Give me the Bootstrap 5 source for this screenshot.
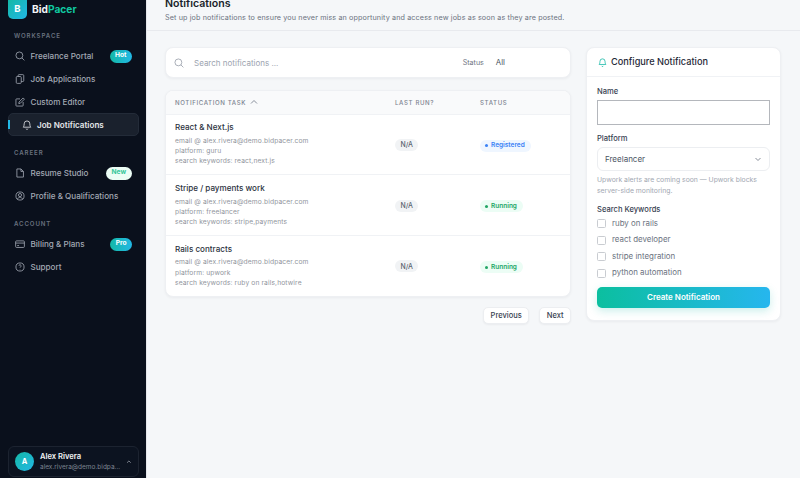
<!DOCTYPE html>
<html lang="en">
<head>
    <meta charset="UTF-8">
    <meta name="viewport" content="width=device-width, initial-scale=1.0">
    <title>Notifications</title>
    <link href="https://cdn.jsdelivr.net/npm/bootstrap@5.3.0/dist/css/bootstrap.min.css" rel="stylesheet">
    <style>
        html, body { height: 100%; overflow: hidden; }
        body { font-family: Inter, "Liberation Sans", sans-serif; background: #f5f7f9; color: #1f2937; font-size: 9.4px; }
        .app-shell { width: 800px; height: 478px; overflow: hidden; }

        .side-bar { width: 147px; height: 478px; background: #0a101c; border-right: 1px solid #e5e7eb; padding: 0 7px 1px 8px; flex-shrink: 0; }
        .brand-row { height: 19px; margin-bottom: 10px; gap: 5px; }
        .brand-logo { width: 19px; height: 19px; margin-top: -1px; border-radius: 0 0 5px 5px; background: linear-gradient(135deg, #14b8a6, #22b8e6); color: #fff; font-weight: 700; font-size: 9.5px; }
        .brand-name { font-weight: 700; font-size: 10.2px; color: #f3f4f6; }
        .brand-name span { color: #10c9a0; }
        .side-head { font-size: 6.1px; font-weight: 600; letter-spacing: .9px; color: #69717f; padding-left: 6px; line-height: 8px; margin: 3px 0 5px; }
        .side-link { height: 22.8px; padding-left: 7px; gap: 5.5px; color: #a3a9b4; font-size: 8.1px; font-weight: 500; text-decoration: none; border-radius: 5px; position: relative; }
        .side-link svg { width: 10px; height: 10px; flex-shrink: 0; }
        .side-link.is-active { background: #1a212d; color: #e5e7eb; padding-left: 12.5px; font-weight: 600; border: 1px solid #232b38; }
        .side-link.is-active::before { content: ""; position: absolute; left: -1px; top: 6px; width: 2px; height: 9px; background: #22b8e6; }
        .side-group { margin-bottom: 9.5px; }
        .tag-pill { margin-left: auto; margin-right: 7px; border-radius: 99px; height: 13px; padding: 0 5.5px; font-size: 6.6px; font-weight: 700; color: #fff; background: linear-gradient(90deg, #14b8a6, #22b8e6); }
        .tag-pill.tag-new { background: #ecfdf5; color: #34c79a; padding: 0 6px; }
        .user-box { margin-top: auto; height: 31px; border: 1px solid #1c2330; border-radius: 6px; padding: 0 6px; gap: 6px; background: #0c1320; }
        .user-dot { width: 19px; height: 19px; border-radius: 50%; background: linear-gradient(135deg, #14b8a6, #22b8e6); color: #fff; font-size: 7.5px; font-weight: 700; flex-shrink: 0; }
        .user-name { font-size: 7.6px; font-weight: 600; color: #f3f4f6; line-height: 10px; }
        .user-mail { font-size: 6.5px; color: #7d8491; line-height: 10px; white-space: nowrap; }

        .main-area { flex: 1; min-width: 0; }
        .page-top { height: 34px; margin-top: -3px; padding: 0 18px; border-bottom: 1px solid #e8eaee; }
        .page-title { font-size: 10.6px; font-weight: 600; color: #1a1f2b; line-height: 14px; margin: 0; }
        .page-sub { font-size: 7.2px; color: #6b7280; line-height: 12px; margin: 1px 0 0 0; letter-spacing: .125px; }
        .page-body { padding: 16px 19px 0 18px; gap: 15px; }
        .left-col { width: 406px; }
        .right-col { width: 195px; }
        .white-card { background: #fff; border: 1px solid #eef0f3; border-radius: 8px; box-shadow: 0 1px 3px rgba(17,24,39,.05); }

        .search-card { height: 31px; padding: 0 8px; margin-bottom: 12px; }
        .search-card svg { width: 10px; height: 10px; color: #8f96a1; }
        .search-hint { margin-left: 10px; font-size: 8px; color: #9ca3af; }
        .status-lab { margin-left: auto; font-size: 7.1px; color: #6b7280; margin-right: 12px; padding-top: 1px; }
        .status-val { font-size: 7.8px; color: #4b5563; margin-right: 57px; }

        .task-table { overflow: hidden; }
        .task-head, .task-row { display: grid; grid-template-columns: 220px 85px 1fr; padding-left: 9px; }
        .task-head { height: 22.5px; background: #f9fafb; align-items: center; font-size: 6.1px; font-weight: 500; letter-spacing: .62px; color: #7c8390; }
        .task-row { height: 60.8px; align-items: center; border-top: 1px solid #f0f2f5; }
        .task-name { font-size: 8.1px; font-weight: 500; color: #2b3240; line-height: 11px; margin-bottom: 2.5px; }
        .task-meta { font-size: 6.7px; color: #91959d; line-height: 10.3px; letter-spacing: .12px; }
        .na-pill { display: inline-block; background: #f1f3f5; color: #5b6370; border-radius: 99px; font-size: 6.9px; font-weight: 500; padding: 1.5px 5.5px; line-height: 9px; }
        .state-pill { display: inline-flex; align-items: center; gap: 3px; border-radius: 99px; font-size: 6.5px; font-weight: 600; padding: 1.5px 6px 1.5px 5px; line-height: 9px; }
        .state-pill::before { content: ""; width: 3px; height: 3px; border-radius: 50%; background: currentColor; }
        .state-reg { background: #eff6ff; color: #3b82f6; }
        .state-run { background: #ecfdf5; color: #22a565; }
        .pager-row { margin-top: 10px; gap: 10px; }
        .pager-btn { background: #fff; border: 1px solid #eceef1; border-radius: 5px; height: 17px; padding: 0 6.5px; font-size: 7.5px; font-weight: 500; color: #374151; box-shadow: 0 1px 2px rgba(17,24,39,.05); }

        .config-head { height: 29px; padding: 0 11px; gap: 4px; border-bottom: 1px solid #f0f2f5; font-size: 9.2px; font-weight: 500; color: #1f2937; }
        .config-head svg { width: 9px; height: 9px; color: #14b8a6; }
        .config-body { padding: 10px 10px 12px 10px; }
        .field-lab { font-size: 7.6px; font-weight: 500; color: #374151; line-height: 10px; margin-bottom: 3px; }
        .kw-lab { margin-bottom: 0; }
        .name-box { display: block; width: 100%; height: 25px; border: 1px solid #b4b7bc; background: #fff; margin-bottom: 9px; }
        .plat-box { height: 24px; border: 1px solid #eceef1; border-radius: 6px; padding: 0 7px; font-size: 8px; color: #4b5563; margin-bottom: 4px; }
        .plat-box svg { width: 8px; height: 8px; color: #6b7280; }
        .help-line { font-size: 6.85px; color: #a2a8b2; line-height: 10.6px; margin-bottom: 9px; }
        .kw-row { height: 16.6px; gap: 6px; font-size: 7.9px; color: #6b7280; }
        .kw-box { width: 9px; height: 9px; border: 1px solid #c9ccd1; border-radius: 1.5px; background: #fff; flex-shrink: 0; }
        .create-btn { display: block; width: 100%; height: 21px; padding: 0; margin-top: 5.3px; border: 0; border-radius: 5px; background: linear-gradient(90deg, #0bbf9f, #26b6ee); color: #fff; font-size: 8px; font-weight: 600; box-shadow: 0 3px 8px rgba(20,184,166,.22); }
    </style>
</head>
<body>
    <div class="app-shell d-flex">
        <aside class="side-bar d-flex flex-column">
            <div class="brand-row d-flex align-items-center">
                <div class="brand-logo d-flex align-items-center justify-content-center">B</div>
                <div class="brand-name">Bid<span>Pacer</span></div>
            </div>

            <div class="side-group">
                <div class="side-head">WORKSPACE</div>
                <a class="side-link d-flex align-items-center" href="#">
                    <svg viewBox="0 0 16 16" fill="none" stroke="currentColor" stroke-width="1.3"><circle cx="7" cy="7" r="5.5"/><path d="M11 11l4 4"/></svg>
                    Freelance Portal<span class="tag-pill d-flex align-items-center">Hot</span>
                </a>
                <a class="side-link d-flex align-items-center" href="#">
                    <svg viewBox="0 0 16 16" fill="none" stroke="currentColor" stroke-width="1.3"><rect x="2" y="4" width="8" height="11" rx="1.5"/><path d="M5 4V2.5A1.5 1.5 0 0 1 6.5 1h6A1.5 1.5 0 0 1 14 2.5v8a1.5 1.5 0 0 1-1.5 1.5H10"/></svg>
                    Job Applications
                </a>
                <a class="side-link d-flex align-items-center" href="#">
                    <svg viewBox="0 0 16 16" fill="none" stroke="currentColor" stroke-width="1.3"><path d="M8 3H2.5a1 1 0 0 0-1 1v9.5a1 1 0 0 0 1 1H12a1 1 0 0 0 1-1V8"/><path d="M6 10.5l.5-2.5 6.500-6.500 2 2-6.500 6.500z"/></svg>
                    Custom Editor
                </a>
                <a class="side-link is-active d-flex align-items-center" href="#">
                    <svg viewBox="0 0 16 16" fill="none" stroke="currentColor" stroke-width="1.3"><path d="M8 1.5A4.5 4.5 0 0 0 3.5 6c0 4-1.5 5.5-1.5 5.5h12S12.5 10 12.5 6A4.5 4.5 0 0 0 8 1.5z"/><path d="M6.5 14a1.6 1.6 0 0 0 3 0"/></svg>
                    Job Notifications
                </a>
            </div>

            <div class="side-group">
                <div class="side-head">CAREER</div>
                <a class="side-link d-flex align-items-center" href="#">
                    <svg viewBox="0 0 16 16" fill="none" stroke="currentColor" stroke-width="1.3"><path d="M3 1.5h6.5l4 4v9H3z"/><path d="M9.5 1.5v4h4"/></svg>
                    Resume Studio<span class="tag-pill tag-new d-flex align-items-center">New</span>
                </a>
                <a class="side-link d-flex align-items-center" href="#">
                    <svg viewBox="0 0 16 16" fill="none" stroke="currentColor" stroke-width="1.3"><circle cx="8" cy="8" r="6.5"/><circle cx="8" cy="6.5" r="2.5"/><path d="M4 13c.8-2 2.2-3 4-3s3.2 1 4 3"/></svg>
                    Profile &amp; Qualifications
                </a>
            </div>

            <div class="side-group">
                <div class="side-head">ACCOUNT</div>
                <a class="side-link d-flex align-items-center" href="#">
                    <svg viewBox="0 0 16 16" fill="none" stroke="currentColor" stroke-width="1.3"><rect x="1" y="3" width="14" height="10.5" rx="1.5"/><path d="M1 6.5h14M3.5 10.5h3"/></svg>
                    Billing &amp; Plans<span class="tag-pill d-flex align-items-center">Pro</span>
                </a>
                <a class="side-link d-flex align-items-center" href="#">
                    <svg viewBox="0 0 16 16" fill="none" stroke="currentColor" stroke-width="1.3"><circle cx="8" cy="8" r="6.5"/><path d="M6.2 6.2a1.8 1.8 0 1 1 2.7 1.600c-.6.300-.9.700-.9 1.400M8 11.200v.6"/></svg>
                    Support
                </a>
            </div>

            <div class="user-box d-flex align-items-center">
                <div class="user-dot d-flex align-items-center justify-content-center">A</div>
                <div class="flex-grow-1">
                    <div class="user-name">Alex Rivera</div>
                    <div class="user-mail">alex.rivera@demo.bidpa...</div>
                </div>
                <svg width="6" height="6" viewBox="0 0 8 8" fill="none" stroke="#8b919c" stroke-width="1.2"><path d="M1.5 5L4 2.5 6.5 5"/></svg>
            </div>
        </aside>

        <main class="main-area">
            <div class="page-top">
                <h1 class="page-title">Notifications</h1>
                <p class="page-sub">Set up job notifications to ensure you never miss an opportunity and access new jobs as soon as they are posted.</p>
            </div>
            <div class="page-body d-flex align-items-start">
                <div class="left-col">
                    <div class="white-card search-card d-flex align-items-center">
                        <svg viewBox="0 0 16 16" fill="none" stroke="currentColor" stroke-width="1.2"><circle cx="7" cy="7" r="5.5"/><path d="M11 11l4 4"/></svg>
                        <span class="search-hint">Search notifications ...</span>
                        <span class="status-lab">Status</span>
                        <span class="status-val">All</span>
                    </div>

                    <div class="white-card task-table">
                        <div class="task-head">
                            <div class="d-flex align-items-center gap-1">NOTIFICATION TASK
                                <svg width="8" height="8" viewBox="0 0 8 8" fill="none" stroke="#7c8390" stroke-width=".9"><path d="M1 5.5L4 2.5 7 5.5"/></svg>
                            </div>
                            <div>LAST RUN?</div>
                            <div>STATUS</div>
                        </div>
                        <div class="task-row">
                            <div>
                                <div class="task-name">React &amp; Next.js</div>
                                <div class="task-meta">email @ alex.rivera@demo.bidpacer.com<br>platform: guru<br>search keywords: react,next.js</div>
                            </div>
                            <div><span class="na-pill">N/A</span></div>
                            <div><span class="state-pill state-reg">Registered</span></div>
                        </div>
                        <div class="task-row">
                            <div>
                                <div class="task-name">Stripe / payments work</div>
                                <div class="task-meta">email @ alex.rivera@demo.bidpacer.com<br>platform: freelancer<br>search keywords: stripe,payments</div>
                            </div>
                            <div><span class="na-pill">N/A</span></div>
                            <div><span class="state-pill state-run">Running</span></div>
                        </div>
                        <div class="task-row">
                            <div>
                                <div class="task-name">Rails contracts</div>
                                <div class="task-meta">email @ alex.rivera@demo.bidpacer.com<br>platform: upwork<br>search keywords: ruby on rails,hotwire</div>
                            </div>
                            <div><span class="na-pill">N/A</span></div>
                            <div><span class="state-pill state-run">Running</span></div>
                        </div>
                    </div>

                    <div class="pager-row d-flex justify-content-end">
                        <button type="button" class="pager-btn">Previous</button>
                        <button type="button" class="pager-btn">Next</button>
                    </div>
                </div>

                <div class="right-col white-card">
                    <div class="config-head d-flex align-items-center">
                        <svg viewBox="0 0 16 16" fill="none" stroke="currentColor" stroke-width="1.4"><path d="M8 1.5A4.5 4.5 0 0 0 3.5 6c0 4-1.5 5.5-1.5 5.5h12S12.5 10 12.5 6A4.5 4.5 0 0 0 8 1.5z"/><path d="M6.5 14a1.6 1.6 0 0 0 3 0"/></svg>
                        Configure Notification
                    </div>
                    <div class="config-body">
                        <div class="field-lab">Name</div>
                        <input class="name-box" type="text">
                        <div class="field-lab">Platform</div>
                        <div class="plat-box d-flex align-items-center justify-content-between">Freelancer
                            <svg viewBox="0 0 8 8" fill="none" stroke="currentColor" stroke-width=".8"><path d="M1.5 3L4 5.5 6.5 3"/></svg>
                        </div>
                        <div class="help-line">Upwork alerts are coming soon — Upwork blocks server-side monitoring.</div>
                        <div class="field-lab kw-lab">Search Keywords</div>
                        <div class="kw-row d-flex align-items-center"><span class="kw-box"></span>ruby on rails</div>
                        <div class="kw-row d-flex align-items-center"><span class="kw-box"></span>react developer</div>
                        <div class="kw-row d-flex align-items-center"><span class="kw-box"></span>stripe integration</div>
                        <div class="kw-row d-flex align-items-center"><span class="kw-box"></span>python automation</div>
                        <button type="button" class="create-btn">Create Notification</button>
                    </div>
                </div>
            </div>
        </main>
    </div>

    <script src="https://cdn.jsdelivr.net/npm/bootstrap@5.3.0/dist/js/bootstrap.bundle.min.js"></script>
</body>
</html>
